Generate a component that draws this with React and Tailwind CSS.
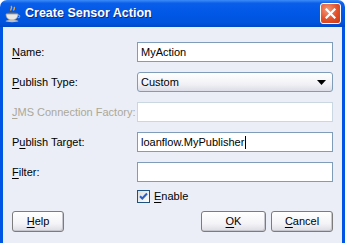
import React from "react";

const U = ({ children }) => <span className="underline underline-offset-[2px] decoration-1">{children}</span>;

function Label({ children, disabled }) {
  return (
    <div className={"flex items-center h-[20px] " + (disabled ? "text-[#aca899]" : "text-black")}>{children}</div>
  );
}

function TextBox({ value, disabled, caret }) {
  return (
    <div
      className={
        "h-[20px] flex items-center px-[3px] bg-white border " +
        (disabled ? "border-[#c9d7e3]" : "border-[#7f9db9]")
      }
    >
      <span>{value}</span>
      {caret && <span className="inline-block w-px h-[13px] bg-black ml-px" />}
    </div>
  );
}

function Button({ children, w }) {
  return (
    <div
      className={
        w +
        " h-[21px] flex items-center justify-center rounded-[3px] border border-[#7c7c7c] bg-[linear-gradient(#ffffff,#f4f4f8_60%,#dcdce4)] shadow-[inset_-1px_-1px_0_#c6c6cf]"
      }
    >
      {children}
    </div>
  );
}

export default function App() {
  return (
    <div className="w-[345px] h-[243px] flex flex-col overflow-hidden font-['Liberation_Sans',Arial,sans-serif] text-[11px]">
      {/* Title bar */}
      <div className="h-[27px] shrink-0 flex items-center pl-[4px] pr-[4px] rounded-t-[7px] bg-[linear-gradient(#3d8cf9,#0a5ee9_12%,#0058e6_50%,#0053dc_85%,#0048c8)]">
        <svg width="18" height="18" viewBox="0 0 18 18" className="shrink-0">
          <path d="M7 1c2 1.5-1 3 0 4.5M10 2c1.5 1.5-1 2.5 0 3.5" stroke="#f5a623" strokeWidth="1.4" fill="none" />
          <ellipse cx="8" cy="9" rx="6" ry="1.6" fill="#8a6a3a" />
          <path d="M2 9h12c0 4-2.5 6-6 6s-6-2-6-6z" fill="#e8e8e8" stroke="#9a9a9a" strokeWidth="0.7" />
          <path d="M14 10.2c2.2-.4 2.6 2.4 0 2.6" stroke="#9a9a9a" strokeWidth="1.1" fill="none" />
          <ellipse cx="8" cy="16" rx="6.5" ry="1.2" fill="#bdbdbd" />
        </svg>
        <div className="ml-[3px] text-white font-bold text-[12.5px] [text-shadow:1px_1px_0_#0a2a82]">Create Sensor Action</div>
        <div className="ml-auto w-[21px] h-[21px] rounded-[3px] border border-white flex items-center justify-center bg-[radial-gradient(circle_at_35%_30%,#f59a78,#e0502a_55%,#c83a16)]">
          <svg width="11" height="11" viewBox="0 0 11 11">
            <path d="M1.5 1.5l8 8M9.5 1.5l-8 8" stroke="white" strokeWidth="2.2" strokeLinecap="square" />
          </svg>
        </div>
      </div>

      {/* Body */}
      <div className="flex-1 border-x-[3px] border-[#0055e5] bg-[#ebeef6] px-[9px] pt-[15px] flex flex-col">
        <div className="grid grid-cols-[125px_1fr] gap-y-[10px]">
          <Label><U>N</U>ame:</Label>
          <TextBox value="MyAction" />

          <Label><U>P</U>ublish Type:</Label>
          <div className="h-[20px] flex items-center justify-between pl-[3px] pr-[6px] rounded-[3px] border border-[#7f9db9] bg-[linear-gradient(#ffffff,#f2f2f6_60%,#dcdde6)]">
            <span>Custom</span>
            <svg width="9" height="5" viewBox="0 0 9 5"><path d="M0 0h9L4.5 5z" fill="#000" /></svg>
          </div>

          <Label disabled><U>J</U>MS Connection Factory:</Label>
          <TextBox value="" disabled />

          <Label>P<U>u</U>blish Target:</Label>
          <TextBox value="loanflow.MyPublisher" caret />

          <Label><U>F</U>ilter:</Label>
          <TextBox value="" />
        </div>

        <div className="mt-[8px] ml-[125px] flex items-center h-[12px]">
          <div className="w-[13px] h-[13px] border border-[#1c5180] bg-[linear-gradient(135deg,#dcdcd7,#ffffff)] flex items-center justify-center">
            <svg width="9" height="9" viewBox="0 0 9 9">
              <path d="M1 4.2l2.3 2.3L8 1.5" stroke="#2a5ec8" strokeWidth="2" fill="none" />
            </svg>
          </div>
          <span className="ml-[4px]"><U>E</U>nable</span>
        </div>

        <div className="mt-[9px] flex items-center">
          <Button w="w-[52px]"><U>H</U>elp</Button>
          <div className="ml-auto flex gap-[5px]">
            <Button w="w-[65px]"><U>O</U>K</Button>
            <Button w="w-[62px]"><U>C</U>ancel</Button>
          </div>
        </div>
      </div>
    </div>
  );
}
